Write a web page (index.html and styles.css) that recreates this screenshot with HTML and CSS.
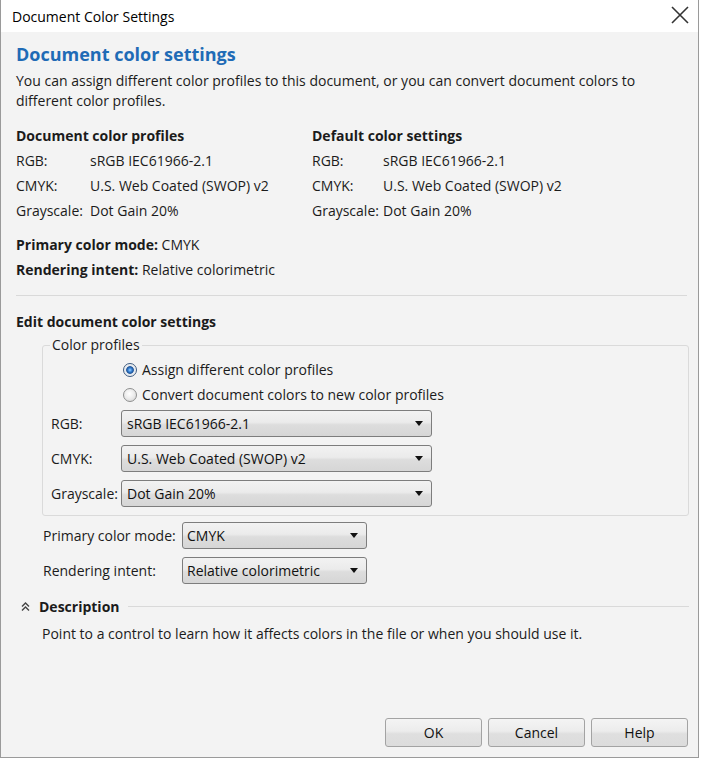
FILE: index.html
```html
<!DOCTYPE html>
<html>
<head>
<meta charset="utf-8">
<link rel="stylesheet" href="styles.css">
</head>
<body>
<div class="window">
  <div class="titlebar">
    <span class="title">Document Color Settings</span>
    <svg class="close" width="18" height="18" viewBox="0 0 18 18"><path d="M1 1 L17 17 M17 1 L1 17" stroke="#333" stroke-width="1.6" fill="none"/></svg>
  </div>
  <div class="content">
    <h1 class="heading">Document color settings</h1>
    <p class="intro">You can assign different color profiles to this document, or you can convert document colors to different color profiles.</p>

    <div class="profiles">
      <div class="profile-col">
        <div class="bold-line">Document color profiles</div>
        <div class="kv"><span class="k">RGB:</span><span>sRGB IEC61966-2.1</span></div>
        <div class="kv"><span class="k">CMYK:</span><span>U.S. Web Coated (SWOP) v2</span></div>
        <div class="kv"><span class="k">Grayscale:</span><span>Dot Gain 20%</span></div>
      </div>
      <div class="profile-col right">
        <div class="bold-line">Default color settings</div>
        <div class="kv"><span class="k">RGB:</span><span>sRGB IEC61966-2.1</span></div>
        <div class="kv"><span class="k">CMYK:</span><span>U.S. Web Coated (SWOP) v2</span></div>
        <div class="kv"><span class="k">Grayscale:</span><span>Dot Gain 20%</span></div>
      </div>
    </div>

    <div class="summary">
      <div class="line"><b>Primary color mode:</b> CMYK</div>
      <div class="line"><b>Rendering intent:</b> Relative colorimetric</div>
    </div>

    <div class="separator"></div>

    <div class="bold-line edit-head">Edit document color settings</div>

    <fieldset class="group">
      <legend>Color profiles</legend>
      <div class="radio-row"><span class="radio checked"></span><span>Assign different color profiles</span></div>
      <div class="radio-row"><span class="radio"></span><span>Convert document colors to new color profiles</span></div>
      <div class="select-row"><span class="select-label">RGB:</span><div class="select wide"><span>sRGB IEC61966-2.1</span><span class="arrow"></span></div></div>
      <div class="select-row"><span class="select-label">CMYK:</span><div class="select wide"><span>U.S. Web Coated (SWOP) v2</span><span class="arrow"></span></div></div>
      <div class="select-row"><span class="select-label">Grayscale:</span><div class="select wide"><span>Dot Gain 20%</span><span class="arrow"></span></div></div>
    </fieldset>

    <div class="mode-rows">
      <div class="mode-row"><span class="mode-label">Primary color mode:</span><div class="select narrow"><span>CMYK</span><span class="arrow"></span></div></div>
      <div class="mode-row"><span class="mode-label">Rendering intent:</span><div class="select narrow"><span>Relative colorimetric</span><span class="arrow"></span></div></div>
    </div>

    <div class="desc-head">
      <svg class="chev" width="9" height="9" viewBox="0 0 9 9"><path d="M1 4.5 L4.5 1 L8 4.5 M1 8.5 L4.5 5 L8 8.5" stroke="#444" stroke-width="1.4" fill="none"/></svg>
      <span class="desc-title">Description</span>
      <span class="desc-rule"></span>
    </div>
    <p class="desc">Point to a control to learn how it affects colors in the file or when you should use it.</p>

    <div class="spacer"></div>

    <div class="buttons">
      <div class="btn">OK</div>
      <div class="btn">Cancel</div>
      <div class="btn">Help</div>
    </div>
  </div>
</div>
</body>
</html>
```

FILE: styles.css
```css
html, body {
  margin: 0;
  padding: 0;
  background: #ffffff;
}
body {
  font-family: "Open Sans", "Noto Sans", sans-serif;
  font-size: 14px;
  color: #1b1b1b;
}
.window {
  width: 697px;
  height: 757px;
  border-left: 1px solid #9a9a9a;
  border-right: 1px solid #9a9a9a;
  border-bottom: 1px solid #9a9a9a;
  display: flex;
  flex-direction: column;
  background: #f3f3f3;
}
.titlebar {
  height: 32px;
  background: #ffffff;
  display: flex;
  align-items: center;
  justify-content: space-between;
  padding: 0 9px 0 11px;
  flex-shrink: 0;
}
.title {
  font-size: 14px;
  color: #000;
}
.close {
  margin-top: -2px;
}
.content {
  flex: 1;
  display: flex;
  flex-direction: column;
  padding: 0 9px 10px 15px;
}
.heading {
  margin: 9px 0 0 0;
  font-size: 18px;
  line-height: 26px;
  font-weight: 700;
  color: #1f6bb6;
}
.intro {
  margin: 4px 0 0 0;
  line-height: 20px;
  padding-right: 30px;
}
.profiles {
  display: flex;
  margin-top: 12px;
}
.profile-col {
  width: 296px;
}
.bold-line {
  font-weight: 700;
  line-height: 25px;
}
.kv {
  display: flex;
  line-height: 25px;
}
.k {
  width: 74px;
}
.profile-col.right .k {
  width: 71px;
}
.summary {
  margin-top: 9px;
}
.line {
  line-height: 25px;
}
.summary b {
  font-weight: 700;
}
.separator {
  height: 1px;
  background: #d9d9d9;
  margin: 13px 2px 0 0;
}
.edit-head {
  margin-top: 13px;
}
.group {
  margin: 1px 0 0 26px;
  padding: 2px 0 8px 8px;
  border: 1px solid #dadada;
  border-radius: 3px;
  min-width: 0;
}
.group legend {
  padding: 0 2px;
  margin-left: -1px;
  line-height: 20px;
}
.radio-row {
  display: flex;
  align-items: center;
  height: 25px;
  padding-left: 72px;
  gap: 5px;
}
.radio {
  box-sizing: border-box;
  width: 14px;
  height: 14px;
  border-radius: 50%;
  border: 1px solid #8e8f8f;
  background: radial-gradient(circle at 45% 40%, #ffffff 0%, #ebebeb 50%, #cfcfcf 100%);
  flex-shrink: 0;
}
.radio.checked {
  border-color: #3d5a80;
  background: radial-gradient(circle at 50% 50%, #9fd0ff 0%, #3a86d8 22%, #1a4f94 40%, #dfe6ee 50%, #f2f2f2 70%, #cfcfcf 100%);
}
.select-row {
  display: flex;
  align-items: center;
  margin-top: 8px;
}
.radio-row + .select-row {
  margin-top: 3px;
}
.select-label {
  width: 70px;
}
.select {
  box-sizing: border-box;
  height: 27px;
  border: 1px solid #7d7d7d;
  border-radius: 3px;
  background: linear-gradient(#f2f2f2 0%, #ebebeb 45%, #dddddd 55%, #d6d6d6 100%);
  display: flex;
  align-items: center;
  justify-content: space-between;
  padding: 0 8px 0 5px;
  color: #111;
}
.select.wide {
  width: 311px;
}
.select.narrow {
  width: 185px;
  height: 27px;
  padding-left: 4px;
}
.arrow {
  width: 0;
  height: 0;
  border-left: 4px solid transparent;
  border-right: 4px solid transparent;
  border-top: 5px solid #111;
}
.mode-rows {
  margin-top: 6px;
  padding-left: 27px;
  display: flex;
  flex-direction: column;
  gap: 8px;
}
.mode-row {
  display: flex;
  align-items: center;
}
.mode-label {
  width: 139px;
}
.desc-head {
  display: flex;
  align-items: center;
  margin-top: 10px;
  height: 25px;
  padding-left: 5px;
}
.chev {
  margin-right: 9px;
}
.desc-title {
  font-weight: 700;
}
.desc-rule {
  flex: 1;
  height: 1px;
  background: #d9d9d9;
  margin-left: 8px;
  margin-right: 0;
}
.desc {
  margin: 2px 0 0 26px;
  line-height: 25px;
}
.spacer {
  flex: 1;
}
.buttons {
  display: flex;
  justify-content: flex-end;
  gap: 6px;
  padding-right: 1px;
}
.btn {
  box-sizing: border-box;
  width: 97px;
  height: 29px;
  border: 1px solid #a3a3a3;
  border-radius: 3px;
  background: linear-gradient(#f4f4f4 0%, #ececec 45%, #dfdfdf 55%, #dcdcdc 100%);
  display: flex;
  align-items: center;
  justify-content: center;
  color: #111;
}
```
